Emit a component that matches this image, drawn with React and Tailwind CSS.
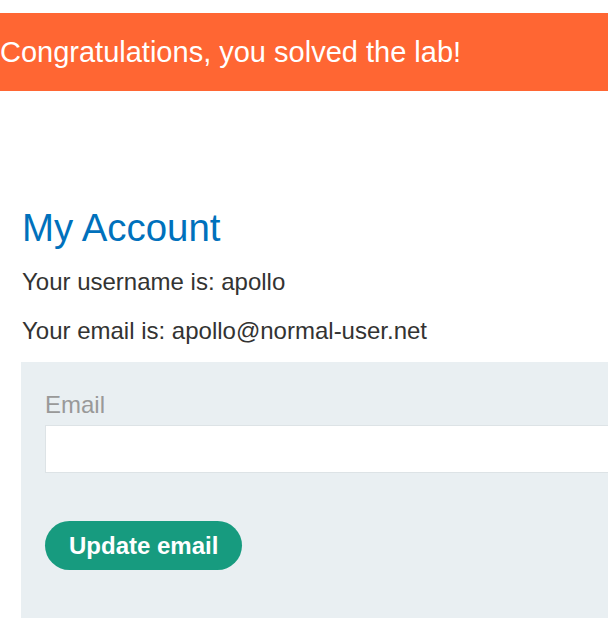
import React from 'react';

const App = () => {
    return (
        <div className="w-[608px] h-[624px] overflow-hidden bg-white font-['Liberation_Sans',Arial,sans-serif]">
            {/* Lab solved banner */}
            <div className="mt-[13px] h-[78px] bg-[#ff6633] flex items-center">
                <span className="text-[29px] leading-[78px] text-white whitespace-nowrap">
                    Congratulations, you solved the lab!
                </span>
            </div>

            <div className="pl-[21px]">
                <h1 className="mt-[114px] pl-px text-[38.4px] leading-[46px] text-[#0071bc] font-normal">My Account</h1>
                <p className="mt-[17px] pl-px text-[24px] leading-[28px] text-[#333332]">Your username is: apollo</p>
                <p className="mt-[21px] pl-px text-[24px] leading-[28px] text-[#333332]">Your email is: apollo@normal-user.net</p>

                {/* Change email form */}
                <form className="mt-[17px] w-[640px] bg-[#e9eff2] pl-6 pt-[29px] pb-[48px]">
                    <label className="block text-[24px] leading-[28px] text-[#999999]">Email</label>
                    <input
                        type="email"
                        className="block mt-[6px] w-[600px] h-[48px] bg-white border border-[#dde3e6] outline-none"
                    />
                    <button
                        type="button"
                        className="mt-[48px] h-[49px] px-[24px] rounded-full bg-[#179b7f] text-white font-bold text-[24px] leading-[49px]"
                    >
                        Update email
                    </button>
                </form>
            </div>
        </div>
    );
};

export default App;
